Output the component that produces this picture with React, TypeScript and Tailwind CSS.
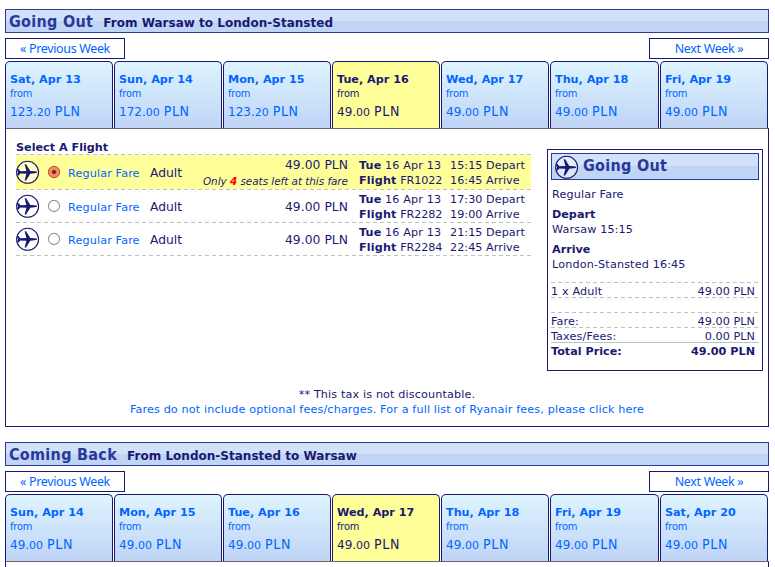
import React from "react";

type Day = {
  date: string;
  whole: string;
  cents: string;
};

type Flight = {
  number: string;
  depart: string;
  arrive: string;
  seatsLeft?: number;
};

type WeekProps = {
  title: string;
  route: string;
  days: Day[];
};

const outboundDays: Day[] = [
  { date: "Sat, Apr 13", whole: "123.", cents: "20" },
  { date: "Sun, Apr 14", whole: "172.", cents: "00" },
  { date: "Mon, Apr 15", whole: "123.", cents: "20" },
  { date: "Tue, Apr 16", whole: "49.", cents: "00" },
  { date: "Wed, Apr 17", whole: "49.", cents: "00" },
  { date: "Thu, Apr 18", whole: "49.", cents: "00" },
  { date: "Fri, Apr 19", whole: "49.", cents: "00" },
];

const returnDays: Day[] = [
  { date: "Sun, Apr 14", whole: "49.", cents: "00" },
  { date: "Mon, Apr 15", whole: "49.", cents: "00" },
  { date: "Tue, Apr 16", whole: "49.", cents: "00" },
  { date: "Wed, Apr 17", whole: "49.", cents: "00" },
  { date: "Thu, Apr 18", whole: "49.", cents: "00" },
  { date: "Fri, Apr 19", whole: "49.", cents: "00" },
  { date: "Sat, Apr 20", whole: "49.", cents: "00" },
];

const flights: Flight[] = [
  { number: "FR1022", depart: "15:15", arrive: "16:45", seatsLeft: 4 },
  { number: "FR2282", depart: "17:30", arrive: "19:00" },
  { number: "FR2284", depart: "21:15", arrive: "22:45" },
];

const PlaneIcon: React.FC = () => (
  <svg className="w-6 h-6 shrink-0" viewBox="0 0 24 24">
    <circle cx="11.6" cy="12.3" r="11" fill="#fff" fillOpacity="0.45" stroke="#191970" strokeWidth="1.1" />
    <path
      d="M1.2 9h1.3l1.9 2.2 6-.3L8.6 4.2h1.5l4.2 6.7 4.4.4c1.6.1 2.5.5 2.5 1s-.9.9-2.5 1l-4.4.4-4.2 6.7H8.6l1.8-6.7-6-.3-1.9 2.2H1.2l.7-3.3z"
      fill="#191970"
    />
  </svg>
);

const DashedLine: React.FC = () => (
  <div className="h-px w-full bg-[repeating-linear-gradient(90deg,#c0c0c0_0_4px,transparent_4px_7px)]" />
);

const Radio: React.FC<{ checked: boolean }> = ({ checked }) => (
  <svg className="w-[14px] h-[14px] shrink-0" viewBox="0 0 14 14">
    {checked ? (
      <>
        <circle cx="7" cy="7" r="5.7" fill="#f5875f" stroke="#c4512f" />
        <circle cx="7" cy="7" r="3.4" fill="#ee7650" stroke="#f9a583" strokeWidth="0.6" />
        <circle cx="7" cy="7" r="2" fill="#4a3030" />
      </>
    ) : (
      <circle cx="7" cy="7" r="5.6" fill="#fff" stroke="#999690" strokeWidth="1.1" />
    )}
  </svg>
);

const WeekHeader: React.FC<WeekProps> = ({ title, route, days }) => (
  <div className="tracking-normal">
    <div className="h-6 px-[3px] border border-[#2b3b96] bg-[linear-gradient(#d0e1f9_0_50%,#c0d4f5_50%_100%)] flex items-baseline">
      <h2 className="font-['DejaVu_Sans_Condensed','DejaVu_Sans'] font-stretch-condensed text-[16px] leading-[24px] tracking-[0.3px] font-bold text-[#2a3899]">{title}</h2>
      <span className="ml-[10px] text-[12px] tracking-[0.02px] font-bold">{route}</span>
    </div>

    {/* Week navigation */}
    <div className="mt-[5px] flex justify-between font-['Noto_Sans'] text-[12.5px] tracking-[-0.35px] leading-[19px] text-[#0066ff]">
      <a className="w-[120px] border border-[#191970] text-center">« Previous Week</a>
      <a className="w-[120px] border border-[#191970] text-center">Next Week »</a>
    </div>

    {/* Day tabs */}
    <div className="mt-[2px] h-[67px] grid grid-cols-[108px_108px_108px_108px_108px_109px_108px] gap-x-px">
      {days.map((day, i) => (
        <div
          key={day.date}
          className={
            i === 3
              ? "border border-b-0 border-[#191970] rounded-t-[5px] pl-1 bg-[#ffff99] text-[#191970]"
              : "border border-b-0 border-[#191970] rounded-t-[5px] pl-1 bg-linear-to-b from-[#def4fe] to-[#bfd4f6] text-[#0066ff]"
          }
        >
          <p className="mt-[11px] text-[11.2px] leading-[14px] font-bold">{day.date}</p>
          <p className="font-['DejaVu_Sans_Condensed','DejaVu_Sans'] font-stretch-condensed text-[11px] leading-[14px] tracking-[-0.2px]">from</p>
          <p className="mt-px text-[12px] leading-[18px]">
            {day.whole}
            <span className="text-[11px]">{day.cents}</span>
            <span className="font-['DejaVu_Sans_Condensed','DejaVu_Sans'] font-stretch-condensed text-[14px] tracking-[0.6px] ml-[4px]">PLN</span>
          </p>
        </div>
      ))}
    </div>
  </div>
);

const FlightList: React.FC = () => (
  <div className="w-[515px] shrink-0">
    <h3 className="h-[15px] leading-[17px] tracking-normal font-bold">Select A Flight</h3>
    <DashedLine />
    {flights.map((flight) => (
      <div key={flight.number}>
        <div className={flight.seatsLeft ? "h-[34px] flex items-center bg-[#ffff99]" : "h-[32px] flex items-center"}>
          <PlaneIcon />
          <div className="ml-[7px] flex">
            <Radio checked={!!flight.seatsLeft} />
          </div>
          <span className="ml-[7px] pt-[4px] w-[82px] text-[#0066ff]">Regular Fare</span>
          <span className="pt-[2px] text-[12.3px] tracking-normal">Adult</span>
          <div className="flex-1 pt-[2px] text-right leading-[16px]">
            <p className="text-[12.3px] tracking-[0.05px]">49.00 PLN</p>
            {flight.seatsLeft && (
              <p className="text-[10.4px] tracking-[-0.02px] italic">
                Only <b className="text-[#ff0000]">{flight.seatsLeft}</b> seats left at this fare
              </p>
            )}
          </div>
          <div className="ml-[11px] pt-[2px] w-[91px] leading-[15px]">
            <p><b>Tue</b> 16 Apr 13</p>
            <p><b>Flight</b> <span className="tracking-[-0.1px]">{flight.number}</span></p>
          </div>
          <div className="pt-[2px] w-[81px] leading-[15px] tracking-[0.05px]">
            <p>{flight.depart} Depart</p>
            <p>{flight.arrive} Arrive</p>
          </div>
        </div>
        <DashedLine />
      </div>
    ))}
  </div>
);

const Summary: React.FC = () => (
  <div className="mt-[10px] w-[216px] h-[222px] border border-[#191970] p-[3px] leading-[15px]">
    <div className="h-[27px] w-[208px] pl-[3px] border border-[#2b3b96] bg-[linear-gradient(#d0e1f9_0_50%,#c0d4f5_50%_100%)] flex items-center">
      <PlaneIcon />
      <h2 className="ml-1 -mt-[2px] font-['DejaVu_Sans_Condensed','DejaVu_Sans'] font-stretch-condensed text-[16px] tracking-[0.3px] font-bold text-[#2a3899]">Going Out</h2>
    </div>
    <div className="pl-px">
      <p className="mt-[7px]">Regular Fare</p>
      <p className="mt-[5px] font-bold tracking-normal">Depart</p>
      <p>Warsaw 15:15</p>
      <p className="mt-[5px] font-bold tracking-normal">Arrive</p>
      <p className="tracking-[0.15px]">London-Stansted 16:45</p>
    </div>
    <div className="mt-[10px] w-[208px] leading-[17px]">
      <DashedLine />
      <div className="h-[14px] pr-[4px] flex justify-between"><span>1 x Adult</span><span className="tracking-[0.05px]">49.00 PLN</span></div>
      <DashedLine />
      <div className="h-[14px]" />
      <DashedLine />
      <div className="h-[14px] pr-[4px] flex justify-between"><span>Fare:</span><span className="tracking-[0.05px]">49.00 PLN</span></div>
      <DashedLine />
      <div className="h-[14px] pr-[4px] flex justify-between"><span>Taxes/Fees:</span><span className="tracking-[0.05px]">0.00 PLN</span></div>
      <div className="h-px bg-[#c0c0c0]" />
      <div className="h-[14px] pr-[4px] flex justify-between font-bold tracking-normal"><span>Total Price:</span><span>49.00 PLN</span></div>
    </div>
  </div>
);

const App: React.FC = () => {
  return (
    <main className="w-[775px] h-[567px] overflow-hidden bg-white pt-[9px] pl-[5px] font-['DejaVu_Sans',sans-serif] text-[11.2px] tracking-[0.14px] text-[#191970]">
      <div className="w-[764px]">
        <WeekHeader title="Going Out" route="From Warsaw to London-Stansted" days={outboundDays} />

        {/* Flights and price */}
        <section className="h-[299px] border border-[#191970] border-t-[#666666] pl-[10px] pt-[10px]">
          <div className="flex">
            <FlightList />
            <div className="ml-[16px]">
              <Summary />
            </div>
          </div>
          <div className="mt-4 mr-[10px] text-center leading-[15px]">
            <p>** This tax is not discountable.</p>
            <p className="text-[#0066ff]">
              Fares do not include optional fees/charges. For a full list of Ryanair fees, please click here
            </p>
          </div>
        </section>

        <div className="mt-[15px]">
          <WeekHeader title="Coming Back" route="From London-Stansted to Warsaw" days={returnDays} />
          <section className="h-10 border border-[#191970] border-t-[#666666]" />
        </div>
      </div>
    </main>
  );
};

export default App;
